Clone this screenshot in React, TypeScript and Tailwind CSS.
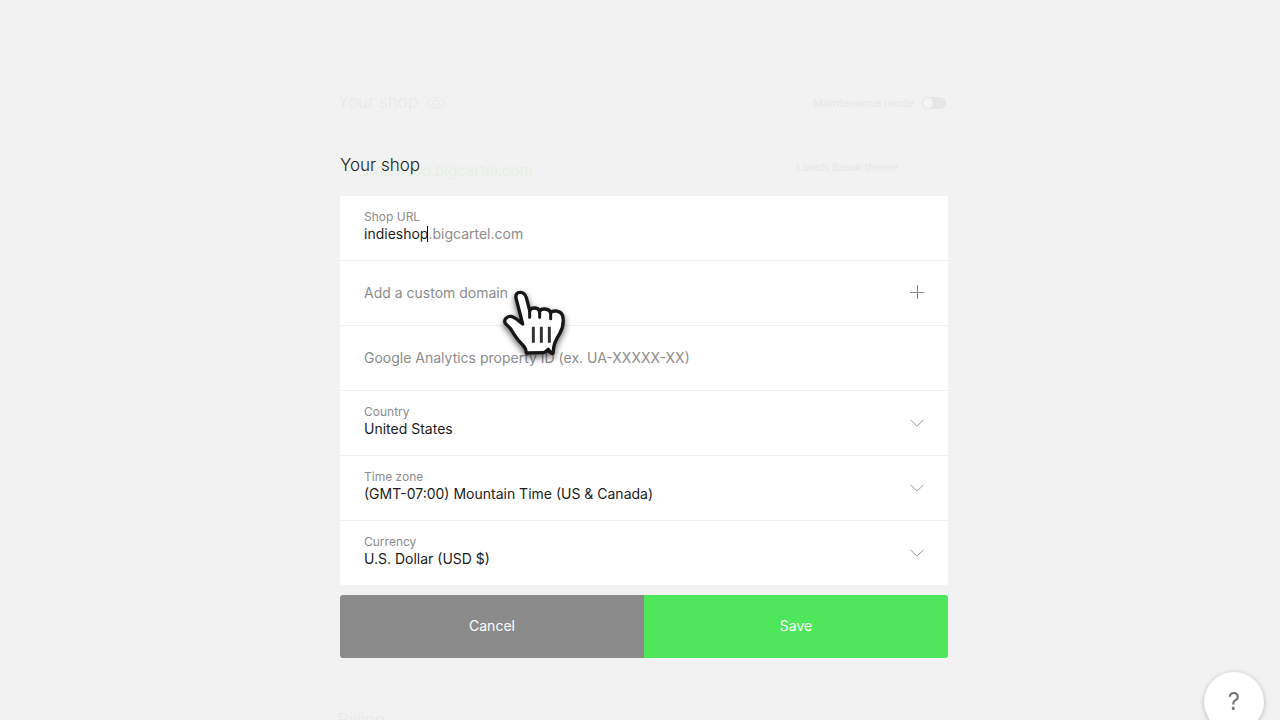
import React, { useState } from 'react'

interface SelectField {
  id: string
  label: string
  options: string[]
}

const selectFields: SelectField[] = [
  { id: 'country', label: 'Country', options: ['United States', 'Canada', 'Mexico'] },
  {
    id: 'timezone',
    label: 'Time zone',
    options: ['(GMT-07:00) Mountain Time (US & Canada)', '(GMT-08:00) Pacific Time (US & Canada)'],
  },
  { id: 'currency', label: 'Currency', options: ['U.S. Dollar (USD $)', 'Canadian Dollar (CAD $)'] },
]

function ChevronIcon() {
  return (
    <svg
      viewBox="0 0 14 8"
      fill="none"
      stroke="#999"
      className="pointer-events-none absolute right-6 top-7 h-2 w-[14px]"
    >
      <path d="M0.5 0.8L7 7.2L13.5 0.8" />
    </svg>
  )
}

function HandCursor() {
  return (
    <svg
      viewBox="0 0 270 270"
      className="pointer-events-none absolute left-[150px] top-[19px] z-20 size-[90px] drop-shadow-[0_3px_3px_rgba(0,0,0,0.6)]"
    >
      <path
        d="M98 132L79 58C75 43 81 37 91 37C101 37 106 43 109 53L119 92C122 82 144 80 149 94C153 84 176 84 182 98C190 90 212 91 218 107C221 122 219 144 209 161C199 177 192 188 191 204L189 220C182 221 178 212 175 208C170 211 165 218 159 218L109 219C109 205 101 197 91 187C78 174 69 157 61 145L46 130C40 119 51 108 63 109C76 111 86 123 98 132Z"
        fill="#fff"
        stroke="#161616"
        strokeWidth="10"
        strokeLinejoin="round"
      />
      <path
        d="M119 88V112M149 92V112M182 96V116"
        stroke="#161616"
        strokeWidth="9"
        strokeLinecap="round"
      />
      <path d="M130 140V188M154 140V188M178 140V188" stroke="#333" strokeWidth="9" />
    </svg>
  )
}

// Faded settings page behind the open form
function PageBehind() {
  return (
    <div aria-hidden="true" className="absolute inset-0 overflow-hidden pl-1 text-[#e9e9e9]">
      <div className="mx-auto flex h-full w-full max-w-[608px] flex-col">
        <div className="h-11 shrink-0 border-b border-[#efefef]" />
        <div className="mt-[45px] flex h-7 shrink-0 items-center justify-between">
          <div className="flex items-center gap-2">
            <span className="text-[17px] font-light">Your shop</span>
            <svg viewBox="0 0 20 14" fill="none" stroke="currentColor" className="h-[14px] w-5">
              <path d="M1 7C5 0 15 0 19 7C15 14 5 14 1 7Z" />
              <circle cx="10" cy="7" r="3" />
            </svg>
          </div>
          <div className="flex items-center gap-2">
            <span className="text-[11px] font-medium">Maintenance mode</span>
            <div className="flex h-3 w-6 items-center rounded-full bg-[#e6e6e6]">
              <div className="size-3 rounded-full border border-[#e6e6e6] bg-[#f5f5f5]" />
            </div>
          </div>
        </div>
        <div className="mt-9 flex h-7 shrink-0 items-center justify-between pl-6 pr-12">
          <span className="pt-2 text-[15px] text-[#e7f0e3]">indieshop.bigcartel.com</span>
          <span className="text-[11px] font-medium">Lunch Break theme</span>
        </div>
        <div className="mt-auto h-3 shrink-0 text-[17px] font-light leading-6">Billing</div>
      </div>
    </div>
  )
}

export default function App() {
  const [shopUrl, setShopUrl] = useState('indieshop')

  return (
    <div className="relative min-h-screen bg-[#f2f2f2] pl-2 font-['Inter',sans-serif] text-[14px] text-[#1c1c1c]">
      <PageBehind />

      <form onSubmit={(e) => e.preventDefault()} className="relative z-10 mx-auto max-w-[608px] pt-[153px]">
        <h1 className="text-[17px] font-light leading-6">Your shop</h1>

        {/* Fields */}
        <div className="mt-[19px] divide-y divide-[#f0f0f0] rounded-[3px] bg-white">
          <div className="h-[65px] px-6 pt-[13px]">
            <label htmlFor="shop-url" className="block text-[12px] leading-4 text-[#8c8c8c]">
              Shop URL
            </label>
            <div className="flex items-center leading-[18px]">
              <input
                id="shop-url"
                value={shopUrl}
                onChange={(e) => setShopUrl(e.target.value)}
                className="field-sizing-content h-[18px] outline-none"
              />
              <span className="-ml-px h-4 w-px bg-black" />
              <span className="text-[#8c8c8c]">.bigcartel.com</span>
            </div>
          </div>

          <div className="relative">
            <button
              type="button"
              className="flex h-16 w-full items-center justify-between px-6 pb-0.5 text-[#8c8c8c]"
            >
              Add a custom domain
              <svg viewBox="0 0 14 14" stroke="#8c8c8c" className="size-[14px]">
                <path d="M7.5 0V14M0 7.5H14" />
              </svg>
            </button>
            <HandCursor />
          </div>

          <div className="h-[65px]">
            <input
              aria-label="Google Analytics property ID"
              placeholder="Google Analytics property ID (ex. UA-XXXXX-XX)"
              className="h-full w-full px-6 pb-0.5 outline-none placeholder:text-[#8c8c8c]"
            />
          </div>

          {selectFields.map((field) => (
            <div key={field.id} className="relative h-[65px] px-6 pt-[13px] last:h-16">
              <label htmlFor={field.id} className="block text-[12px] leading-4 text-[#8c8c8c]">
                {field.label}
              </label>
              <select id={field.id} className="block h-[18px] w-full appearance-none leading-[18px] outline-none">
                {field.options.map((option) => (
                  <option key={option}>{option}</option>
                ))}
              </select>
              <ChevronIcon />
            </div>
          ))}
        </div>

        {/* Actions */}
        <div className="mt-[10px] grid h-[63px] grid-cols-2 overflow-hidden rounded-[3px] text-white">
          <button type="button" className="bg-[#8b8b8b] pb-0.5">
            Cancel
          </button>
          <button type="submit" className="bg-[#4ee65a] pb-0.5">
            Save
          </button>
        </div>
      </form>

      <button
        type="button"
        aria-label="Help"
        className="fixed -bottom-3 right-4 z-20 flex size-[60px] items-center justify-center rounded-full bg-white text-[24px] text-[#757575] shadow-[0_1px_5px_rgba(0,0,0,0.25)]"
      >
        ?
      </button>
    </div>
  )
}
